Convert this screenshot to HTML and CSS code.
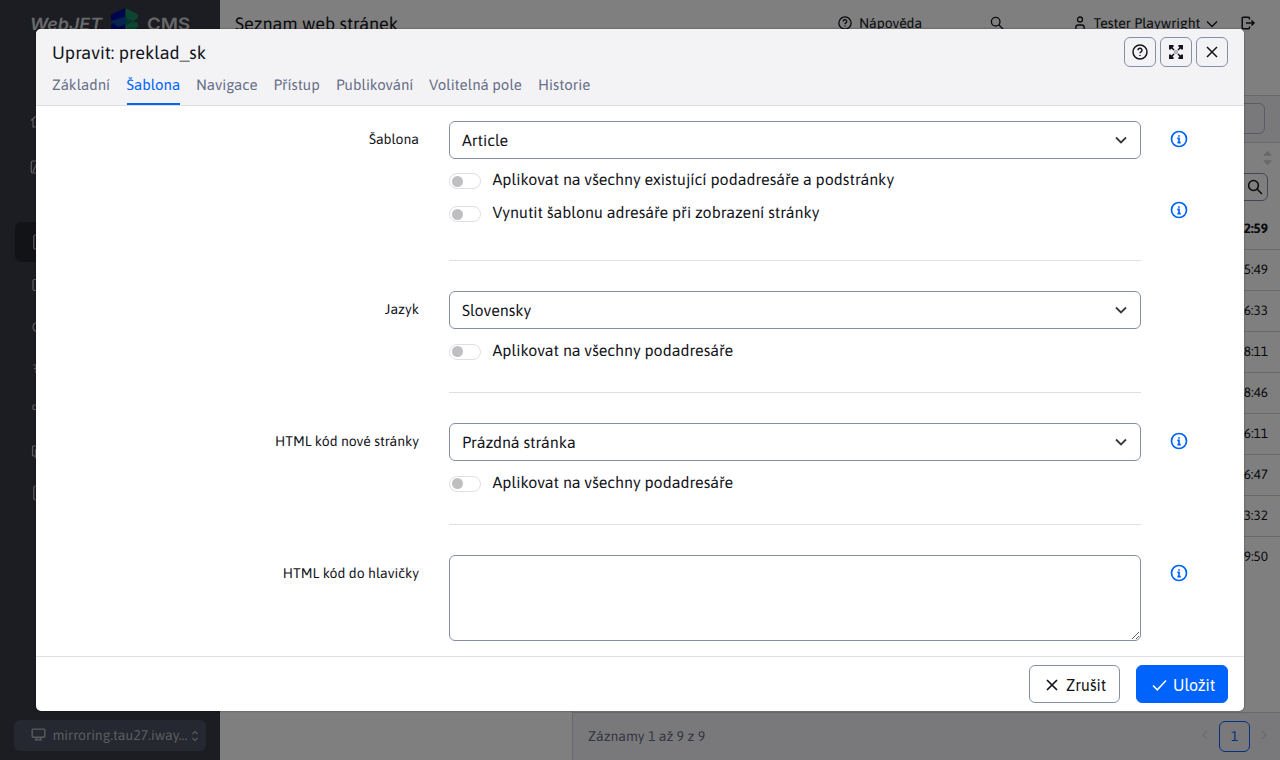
FILE: index.html
```html
<!DOCTYPE html>
<html lang="cs">
<head>
<meta charset="utf-8">
<title>Upravit: preklad_sk</title>
<link rel="stylesheet" href="styles.css">
</head>
<body>
<svg class="defs" width="0" height="0">
  <symbol id="help" viewBox="0 0 16 16"><circle cx="8" cy="8" r="7" /><path d="M6 6.300a2 2 0 1 1 3 1.600c-.7.4-1 .7-1 1.400M8 10.900v1.100"/></symbol>
  <symbol id="search" viewBox="0 0 16 16"><circle cx="6.500" cy="6.500" r="4.900"/><path d="M10 10l5 5"/></symbol>
  <symbol id="cross" viewBox="0 0 12 12"><path d="M1 1l10 10M11 1L1 11"/></symbol>
  <symbol id="chevron" viewBox="0 0 12 8"><path d="M1 1.500l5 5 5-5"/></symbol>
  <symbol id="info" viewBox="0 0 18 18"><circle cx="9" cy="9" r="7.500"/><path d="M7.300 8.400h1.700v4M7.400 12.600h3.400M9 5.200v1.600"/></symbol>
</svg>

<div class="app">
  <aside class="sidebar">
    <div class="logo">
      <svg class="logo-web" viewBox="0 0 74 22"><text x="0" y="16" textLength="72" lengthAdjust="spacingAndGlyphs">WebJET</text></svg>
      <svg class="logo-mark" viewBox="0 0 28 28"><path fill="#000b9c" d="M14.500 1L0 7.500V13l3 3-3 2v6l14.500 4z"/><path fill="#1a8a5c" d="M14.500 1L27 7.500V11l-5 3.500-7.500-3z"/><path fill="#0a4a9a" d="M0 14l14.500-4.500V17L7 20z"/><path fill="#0b6a68" d="M14.500 10.500l8 3.500-8 4z"/><path fill="#1a8a5c" d="M14.500 18l8-3.500L27 16v4l-12.500 7z"/></svg>
      <svg class="logo-cms" viewBox="0 0 44 22"><text x="0" y="16" textLength="43" lengthAdjust="spacingAndGlyphs">CMS</text></svg>
    </div>
    <nav class="menu">
      <a><svg viewBox="0 0 16 16"><path d="M1 7.500L8 1.500l7 6M3 6.500V14h3.500v-4h3v4H13V6.500"/></svg></a>
      <a><svg viewBox="0 0 16 16"><rect x="1.300" y="2" width="13.400" height="12" rx="1.500"/><path d="M3 13l3-7 4 6 2-3 2 4"/></svg></a>
      <a class="current"><svg viewBox="0 0 16 16"><rect x="3.800" y="1" width="9" height="14" rx="1.500"/></svg></a>
      <a><svg viewBox="0 0 16 16"><rect x="3" y="1.500" width="12" height="11" rx="1.500"/></svg></a>
      <a><svg viewBox="0 0 16 16"><circle cx="8" cy="8" r="5"/><path d="M8 4v6"/></svg></a>
      <a><svg viewBox="0 0 16 16"><path d="M3.200 4h9M3.800 7.500h9M6 4v8"/></svg></a>
      <a><svg viewBox="0 0 16 16"><rect x="3" y="3" width="8" height="4.500" rx="1"/></svg></a>
      <a><svg viewBox="0 0 16 16"><path d="M5 12H3.500a1 1 0 0 1-1-1V3a1 1 0 0 1 1-1H11"/><rect x="5.500" y="5" width="9" height="9" rx="1"/></svg></a>
      <a><svg viewBox="0 0 16 16"><rect x="3.800" y="1" width="9" height="14" rx="1.500"/></svg></a>
    </nav>
    <div class="domain">
      <svg class="monitor" viewBox="0 0 16 14"><rect x="1.200" y="1.200" width="13.600" height="8.800" rx="1"/><path d="M6 10v2.500M10 10v2.500M4 12.800h8"/></svg>
      <span>mirroring.tau27.iway…</span>
      <svg class="updown" viewBox="0 0 8 12"><path d="M1.500 4L4 1.500 6.500 4M1.500 8L4 10.500 6.500 8"/></svg>
    </div>
  </aside>
  <main class="main">
    <header class="topbar">
      <h1>Seznam web stránek</h1>
      <div class="top-item top-help"><svg class="i14"><use href="#help"/></svg><span>Nápověda</span></div>
      <svg class="i14 top-search"><use href="#search"/></svg>
      <div class="top-item top-user"><svg class="i14" viewBox="0 0 14 14"><circle cx="7" cy="3.500" r="2.500"/><path d="M2.800 14v-2.500A2.500 2.500 0 0 1 5.300 9h3.400a2.500 2.500 0 0 1 2.500 2.500V14"/></svg><span>Tester Playwright</span><svg class="chev"><use href="#chevron"/></svg></div>
      <svg class="i14 top-exit" viewBox="0 0 14 14"><path d="M8.500 3.500V2.200a1 1 0 0 0-1-1H2.200a1 1 0 0 0-1 1v9.600a1 1 0 0 0 1 1h5.300a1 1 0 0 0 1-1v-1.300M5 7h8M10.500 4.500L13 7l-2.500 2.500"/></svg>
    </header>
    <div class="panes">
      <div class="tree"></div>
      <section class="list">
        <div class="toolbar"><div class="field"></div></div>
        <div class="filter">
          <svg class="sort" viewBox="0 0 10 16"><path d="M0 5.500L5 0l5 5.500zM0 10.500L5 16l5-5.500z"/></svg>
          <div class="filter-box"><svg class="i16"><use href="#search"/></svg></div>
        </div>
        <div class="times"><b>12:42:59</b><span>13:45:49</span><span>10:46:33</span><span>12:18:11</span><span>09:18:46</span><span>14:16:11</span><span>15:06:47</span><span>11:03:32</span><span>08:19:50</span></div>
        <footer class="pager">
          <span class="count">Záznamy 1 až 9 z 9</span>
          <svg class="arrow" viewBox="0 0 6 10"><path d="M5 1L1 5l4 4"/></svg>
          <span class="page">1</span>
          <svg class="arrow" viewBox="0 0 6 10"><path d="M1 1l4 4-4 4"/></svg>
        </footer>
      </section>
    </div>
  </main>
</div>

<div class="backdrop">
  <div class="modal">
    <header class="modal-head">
      <div class="title-row">
        <h2>Upravit: preklad_sk</h2>
        <div class="tools">
          <button><svg class="i16"><use href="#help"/></svg></button>
          <button><svg class="i14 expand" viewBox="0 0 14 14"><path d="M2 2l3 3M12 2L9 5M2 12l3-3M12 12L9 9"/><path class="solid" d="M0 0h4.600v1.600L1.600 4.600H0zM14 0v4.600h-1.600L9.400 1.600V0zM0 14V9.400h1.600l3 3V14zM14 14H9.400v-1.600l3-3H14z"/><path class="dot" d="M5.700 5.700l.6.6M8.300 5.700l-.6.6M5.700 8.300l.6-.6M8.300 8.300l-.6-.6"/></svg></button>
          <button><svg class="i12"><use href="#cross"/></svg></button>
        </div>
      </div>
      <nav class="tabs"><a class="t1">Základní</a><a class="t2 active">Šablona</a><a class="t3">Navigace</a><a class="t4">Přístup</a><a class="t5">Publikování</a><a class="t6">Volitelná pole</a><a class="t7">Historie</a></nav>
    </header>
    <div class="modal-body">
      <div class="row tall">
        <label>Šablona</label>
        <div class="control">
          <div class="select"><span>Article</span><svg class="chev"><use href="#chevron"/></svg></div>
          <div class="switch"><i></i><span>Aplikovat na všechny existující podadresáře a podstránky</span></div>
          <div class="switch"><i></i><span>Vynutit šablonu adresáře při zobrazení stránky</span></div>
        </div>
        <div class="hints"><svg><use href="#info"/></svg><svg><use href="#info"/></svg></div>
      </div>
      <div class="row">
        <label>Jazyk</label>
        <div class="control">
          <div class="select"><span>Slovensky</span><svg class="chev"><use href="#chevron"/></svg></div>
          <div class="switch"><i></i><span>Aplikovat na všechny podadresáře</span></div>
        </div>
      </div>
      <div class="row">
        <label>HTML kód nové stránky</label>
        <div class="control">
          <div class="select"><span>Prázdná stránka</span><svg class="chev"><use href="#chevron"/></svg></div>
          <div class="switch"><i></i><span>Aplikovat na všechny podadresáře</span></div>
        </div>
        <div class="hints"><svg><use href="#info"/></svg></div>
      </div>
      <div class="row last">
        <label>HTML kód do hlavičky</label>
        <textarea></textarea>
        <div class="hints"><svg><use href="#info"/></svg></div>
      </div>
    </div>
    <footer class="modal-foot">
      <button class="btn cancel"><svg class="i12"><use href="#cross"/></svg><span>Zrušit</span></button>
      <button class="btn save"><svg class="check" viewBox="0 0 15 12"><path d="M1 6.500l4.300 4.300L14 1.500"/></svg><span>Uložit</span></button>
    </footer>
  </div>
</div>
</body>
</html>
```
FILE: styles.css
```css
* { box-sizing: border-box; }
body { margin: 0; height: 760px; overflow: hidden; font-family: Asap, "Noto Sans", sans-serif; color: #13151b; font-size: 16px; text-rendering: geometricPrecision; }
h1, h2 { margin: 0; font-weight: 400; }
svg { display: block; flex: none; fill: none; stroke: currentColor; stroke-width: 1.5; }
.defs { position: absolute; }
.i12 { width: 12px; height: 12px; }
.i14 { width: 14px; height: 14px; }
.i16 { width: 16px; height: 16px; }
.chev { width: 12px; height: 8px; }

.app { display: flex; height: 760px; }
.sidebar { width: 220px; display: flex; flex-direction: column; background: #383a44; color: #bcbcc0; }
.logo { height: 48px; padding: 7px 0 0 30px; display: flex; align-items: flex-start; color: #d0d0d4; font-family: Inter, sans-serif; font-weight: 600; font-size: 17px; }
.logo text { fill: currentColor; stroke: none; }
.logo-web { width: 74px; height: 22px; margin: 7px 7px 0 0; font-style: italic; }
.logo-mark { width: 28px; height: 28px; stroke: none; }
.logo-cms { width: 44px; height: 22px; margin: 7px 0 0 8px; }
.menu { padding: 52px 14px 0 15px; }
.menu a { height: 41.5px; display: flex; align-items: center; padding-left: 15px; border-radius: 6px; }
.menu a:nth-child(2) { margin: 5px 0 34px; }
.menu svg { width: 16px; height: 16px; stroke-width: 1.2; }
.menu .current { background: #24262c; height: 40px; margin-bottom: 3px; }
.domain { margin: auto 14px 9px; height: 31px; border-radius: 6px; background: #4b5061; color: #b6b8c0; display: flex; align-items: center; padding: 0 7px 0 17px; font-size: 14px; }
.domain span { width: 136px; white-space: nowrap; line-height: 18px; padding-bottom: 1px; }
.monitor { width: 15px; height: 13px; margin: 0 6.5px 2px 0; }
.updown { width: 8px; height: 12px; margin-left: auto; stroke-width: 1.1; }

.main { flex: 1; display: flex; flex-direction: column; background: #fff; }
.topbar { height: 95px; display: flex; align-items: flex-start; padding: 16px 24px 0 15px; font-size: 14px; line-height: 15px; }
h1 { width: 603px; font-size: 18px; line-height: 15px; }
.top-item { display: flex; white-space: nowrap; }
.top-help { width: 152px; gap: 7px; }
.top-search { margin-right: 69px; }
.top-user { width: 168px; gap: 6.5px; }
.top-user > svg { stroke-width: 1.3; }
.top-user span { width: 106px; }
.top-user .chev { margin-top: 4px; }
.panes { flex: 1; display: flex; }
.tree { width: 353px; border-right: 1px solid #d0d3df; }
.list { flex: 1; display: flex; flex-direction: column; }
.toolbar { height: 48px; background: #f3f3f6; border: solid #d0d3df; border-width: 1px 0; padding: 7px 15px; display: flex; justify-content: flex-end; }
.field { width: 200px; height: 31px; border: 1px solid #b2b8ca; border-radius: 6px; }
.filter { display: flex; flex-direction: column; align-items: flex-end; padding: 7px 7px 0 0; height: 66px; }
.sort { width: 9px; height: 16px; margin-right: 1px; fill: #d0d0d5; stroke: none; }
.filter-box { width: 130px; height: 28px; margin: 7px 5px 0 0; border: 1px solid #868ea5; border-radius: 6px; display: flex; align-items: center; justify-content: flex-end; padding-right: 4px; }
.times { display: flex; flex-direction: column; font-size: 13.5px; }
.times > * { height: 41px; line-height: 38px; padding-right: 12px; text-align: right; border-bottom: 1px solid #d0d3df; }
.times > :last-child { border: 0; }
.pager { margin-top: auto; height: 48px; border-top: 1px solid #d0d3df; background: #f3f3f6; display: flex; align-items: center; padding: 0 13px 0 15px; font-size: 14px; color: #686f87; }
.count { flex: 1; padding-bottom: 2px; }
.page { width: 31px; height: 31px; margin: 0 11px; border: 1px solid #0063fb; border-radius: 6px; color: #0063fb; text-align: center; line-height: 29px; }
.arrow { width: 6px; height: 10px; margin-bottom: 4px; color: #d6d7dc; }

.backdrop { position: absolute; inset: 0; background: rgba(0, 0, 0, .5); padding: 29px 36px 49px; }
.modal { height: 682px; border-radius: 5px; overflow: hidden; background: #fff; display: flex; flex-direction: column; box-shadow: 0 0 2px rgba(0, 0, 0, .5); }
.modal-head { height: 77px; background: #f3f3f6; border-bottom: 1px solid #dcdfe6; padding: 8px 16px 0; }
.title-row { display: flex; justify-content: space-between; height: 37px; }
h2 { font-size: 18px; line-height: 32px; }
.tools { display: flex; gap: 4px; }
.tools button { width: 32px; height: 30px; padding: 0; border: 1px solid #868ea5; border-radius: 6px; background: none; color: #13151b; display: flex; align-items: center; justify-content: center; }
.expand .solid { fill: currentColor; stroke: none; }
.expand .dot { stroke-width: 1.2; }
.tabs { display: flex; height: 31px; color: #686f87; font-size: 15px; line-height: 24px; white-space: nowrap; }
.tabs a { margin-right: 16px; height: 31px; }
.tabs .active { color: #0063fb; border-bottom: 2px solid #0063fb; }
.t1 { width: 58.5px; }
.t2 { width: 53.5px; }
.t3 { width: 61.5px; }
.t4 { width: 46.5px; }
.t5 { width: 77px; }
.t6 { width: 93px; }

.modal-body { flex: 1; padding-top: 15px; display: flex; flex-direction: column; gap: 30px; }
.row { display: grid; grid-template-columns: 383px 692px 18px; column-gap: 30px; height: 102px; }
.row.tall { height: 140px; }
.row.last { height: 86px; }
.row label { text-align: right; font-size: 14px; line-height: 37px; }
.control { border-bottom: 1px solid #dcdfe6; }
.select { height: 38px; margin-bottom: 5px; border: 1px solid #868ea5; border-radius: 6px; padding: 0 13px 0 12px; display: flex; align-items: center; justify-content: space-between; }
.select span { padding-top: 2px; }
.select .chev { color: #343a40; stroke-width: 1.8; }
.switch { height: 33px; display: flex; align-items: center; gap: 11.5px; white-space: nowrap; line-height: 22px; }
.switch i { width: 32px; height: 16px; margin-top: 2px; border: 1px solid #dcdfe6; border-radius: 8px; padding: 1.5px 2px; }
.switch i::before { content: ""; display: block; width: 11px; height: 11px; border-radius: 50%; background: #bfbfbf; }
.tall .switch i { margin-top: 1px; }
.tall .switch span { padding-bottom: 2px; }
textarea { display: block; width: 692px; height: 86px; border: 1px solid #868ea5; border-radius: 6px; resize: vertical; background: #fff; }
.hints { margin-left: -1px; padding-top: 9px; display: flex; flex-direction: column; gap: 53px; color: #0063fb; }
.hints svg { width: 18px; height: 18px; stroke-width: 1.7; }
.modal-foot { height: 55px; border-top: 1px solid #dcdfe6; padding: 8px 16px; display: flex; justify-content: flex-end; gap: 16px; }
.btn { height: 38px; padding: 2px 0 0 16px; display: flex; align-items: center; border: 1px solid #868ea5; border-radius: 6px; font: 16px Asap, "Noto Sans", sans-serif; background: #fff; color: #13151b; }
.cancel { width: 91px; gap: 8px; }
.cancel svg { stroke-width: 1.7; }
.save { width: 92px; padding-left: 15px; gap: 6px; background: #0063fb; border-color: #0063fb; color: #fff; }
.check { width: 15px; height: 12px; }
```
